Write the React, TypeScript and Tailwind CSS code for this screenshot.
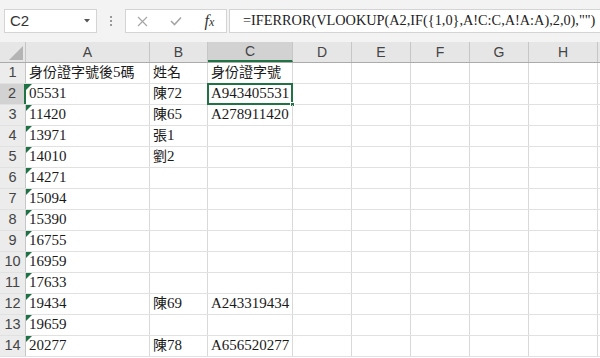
const COLS = [
  { id: "A", w: "w-[124px]" },
  { id: "B", w: "w-[58px]" },
  { id: "C", w: "w-[85px]" },
  { id: "D", w: "w-[59px]" },
  { id: "E", w: "w-[59px]" },
  { id: "F", w: "w-[59px]" },
  { id: "G", w: "w-[59px]" },
  { id: "H", w: "w-[69px]" },
];

const ROWS: string[][] = [
  ["身份證字號後5碼", "姓名", "身份證字號"],
  ["05531", "陳72", "A943405531"],
  ["11420", "陳65", "A278911420"],
  ["13971", "張1", ""],
  ["14010", "劉2", ""],
  ["14271", "", ""],
  ["15094", "", ""],
  ["15390", "", ""],
  ["16755", "", ""],
  ["16959", "", ""],
  ["17633", "", ""],
  ["19434", "陳69", "A243319434"],
  ["19659", "", ""],
  ["20277", "陳78", "A656520277"],
];

const cellFont = { fontFamily: '"Liberation Serif", "Noto Sans CJK TC", serif' };

// CJK glyphs come out a bit wide next to the serif digits, shrink them a touch
function CellText({ text }: { text: string }) {
  const parts = text.match(/[\u4e00-\u9fff]+|[^\u4e00-\u9fff]+/g) ?? [];
  return (
    <span>
      {parts.map((p, i) =>
        /[\u4e00-\u9fff]/.test(p) ? (
          <span key={i} className="text-[14px]">{p}</span>
        ) : (
          <span key={i}>{p}</span>
        )
      )}
    </span>
  );
}

export default function App() {
  return (
    <div className="w-[600px] h-[358px] overflow-hidden bg-white select-none">
      {/* Formula bar */}
      <div className="h-[42px] bg-[#f3f3f3] flex items-start pt-[9px] pl-[4px]">
        <div className="w-[93px] shrink-0 h-[24px] bg-white border border-[#d4d4d4] flex items-center justify-between pl-[5px] pr-[6px]">
          <span className="text-[15px] text-[#333]" style={{ fontFamily: '"Liberation Sans", sans-serif' }}>C2</span>
          <svg width="6" height="4" viewBox="0 0 6 4"><path d="M0 0h6L3 3.5z" fill="#555" /></svg>
        </div>
        <div className="w-[28px] shrink-0 h-[24px] flex flex-col items-center justify-center gap-[2px]">
          <div className="w-[2px] h-[2px] bg-[#999]" />
          <div className="w-[2px] h-[2px] bg-[#999]" />
          <div className="w-[2px] h-[2px] bg-[#999]" />
        </div>
        <div className="w-[102px] shrink-0 h-[24px] bg-white border border-[#d4d4d4] flex items-center">
          <div className="w-[34px] flex justify-center">
            <svg width="11" height="11" viewBox="0 0 11 11"><path d="M1 1l9 9M10 1l-9 9" stroke="#a6a6a6" strokeWidth="1.2" /></svg>
          </div>
          <div className="w-[34px] flex justify-center">
            <svg width="12" height="10" viewBox="0 0 12 10"><path d="M1 5l3.5 3.5L11 1.5" stroke="#a6a6a6" strokeWidth="1.6" fill="none" /></svg>
          </div>
          <div className="w-[34px] flex justify-center">
            <span className="italic text-[16px] text-[#333] leading-none" style={{ fontFamily: '"Liberation Serif", serif' }}>
              f<span className="text-[12px]">x</span>
            </span>
          </div>
        </div>
        <div className="flex-1 min-w-0 overflow-hidden ml-[2px] h-[24px] bg-white border border-[#d4d4d4] border-r-0 flex items-center pl-[13px]">
          <span className="text-[14.3px] text-[#222] whitespace-nowrap" style={cellFont}>
            =IFERROR(VLOOKUP(A2,IF({"{"}1,0{"}"},A!C:C,A!A:A),2,0),"")
          </span>
        </div>
      </div>

      {/* Column headers */}
      <div className="flex h-[21px] bg-[#e6e6e6] border-b border-[#ababab]" style={{ fontFamily: '"Liberation Sans", sans-serif' }}>
        <div className="w-[26px] shrink-0 border-r border-[#c6c6c6] flex items-end justify-end pr-[2px] pb-[2px]">
          <svg width="14" height="14" viewBox="0 0 14 14"><path d="M14 0v14H0z" fill="#b4b4b4" /></svg>
        </div>
        {COLS.map((c) => (
          <div
            key={c.id}
            className={`${c.w} shrink-0 border-r border-[#c6c6c6] flex items-center justify-center text-[14px] text-[#444] ${
              c.id === "C" ? "bg-[#d2d2d2] border-b-2 border-b-[#217346]" : ""
            }`}
          >
            {c.id}
          </div>
        ))}
        <div className="flex-1" />
      </div>

      {/* Rows */}
      {ROWS.map((row, i) => {
        const n = i + 1;
        return (
          <div key={n} className="flex h-[21px] border-b border-[#e1e1e1]">
            <div
              className={`w-[26px] shrink-0 flex items-center justify-center text-[14.5px] text-[#444] ${
                n === 2 ? "bg-[#d2d2d2] border-r-2 border-[#217346]" : "bg-[#ececec] border-r border-[#c6c6c6]"
              }`}
              style={{ fontFamily: '"Liberation Sans", sans-serif' }}
            >
              {n}
            </div>
            {COLS.map((c, ci) => {
              const text = row[ci] ?? "";
              const selected = n === 2 && c.id === "C";
              return (
                <div
                  key={c.id}
                  className={`${c.w} shrink-0 relative border-r border-[#d9d9d9] flex items-end pl-[3px] pb-[1px] text-[15px] leading-[19px] text-[#1a1a1a] whitespace-nowrap`}
                  style={cellFont}
                >
                  {ci === 0 && n > 1 && (
                    <svg className="absolute left-0 top-0" width="6" height="6" viewBox="0 0 6 6"><path d="M0 0h6L0 6z" fill="#1e7145" /></svg>
                  )}
                  {text && <CellText text={text} />}
                  {selected && (
                    <>
                      <div className="absolute -left-[1px] -top-[1px] -right-[1px] -bottom-[1px] border-2 border-[#217346]" />
                      <div className="absolute -right-[3px] -bottom-[3px] w-[5px] h-[5px] bg-[#217346] border border-white" />
                    </>
                  )}
                </div>
              );
            })}
            <div className="flex-1" />
          </div>
        );
      })}
    </div>
  );
}
